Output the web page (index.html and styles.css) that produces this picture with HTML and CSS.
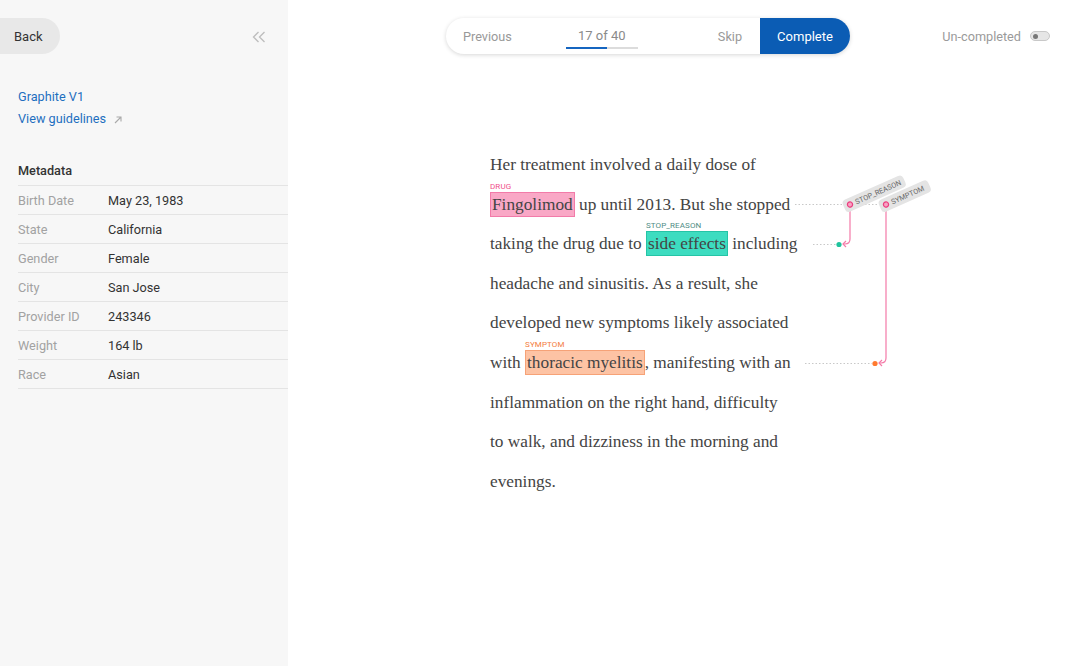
FILE: index.html
```html
<!DOCTYPE html>
<html>
<head>
<meta charset="utf-8">
<link rel="stylesheet" href="styles.css">
</head>
<body>
<div class="app">
  <aside class="sidebar">
    <div class="side-top">
      <button class="back">Back</button>
      <svg class="collapse" width="14" height="12" viewBox="0 0 14 12"><path d="M6.5 1 L1.5 6 L6.5 11 M12.5 1 L7.5 6 L12.5 11" fill="none" stroke="#bdbdbd" stroke-width="1.3"/></svg>
    </div>
    <div class="links">
      <a class="link">Graphite V1</a>
      <a class="link">View guidelines <svg class="ext" width="10" height="10" viewBox="0 0 10 10"><path d="M2 8 L8 2 M3.5 2 H8 V6.5" fill="none" stroke="#aaa" stroke-width="1.1"/></svg></a>
    </div>
    <div class="meta">
      <div class="meta-title">Metadata</div>
      <div class="row"><span class="k">Birth Date</span><span class="v">May 23, 1983</span></div>
      <div class="row"><span class="k">State</span><span class="v">California</span></div>
      <div class="row"><span class="k">Gender</span><span class="v">Female</span></div>
      <div class="row"><span class="k">City</span><span class="v">San Jose</span></div>
      <div class="row"><span class="k">Provider ID</span><span class="v">243346</span></div>
      <div class="row"><span class="k">Weight</span><span class="v">164 lb</span></div>
      <div class="row"><span class="k">Race</span><span class="v">Asian</span></div>
    </div>
  </aside>
  <main class="main">
    <header class="topbar">
      <div class="pill">
        <button class="nav prev">Previous</button>
        <div class="counter">
          <span class="count">17 of 40</span>
          <div class="progress"><div class="progress-fill" style="width:57%"></div></div>
        </div>
        <button class="nav skip">Skip</button>
        <button class="complete">Complete</button>
      </div>
      <div class="status">
        <span>Un-completed</span>
        <span class="toggle"><span class="knob"></span></span>
      </div>
    </header>
    <section class="doc">
      <div class="line">Her treatment involved a daily dose of</div>
      <div class="line"><span class="ent drug"><span class="tag">DRUG</span>Fingolimod</span> up until 2013. But she stopped</div>
      <div class="line">taking the drug due to <span class="ent reason"><span class="tag">STOP_REASON</span>side effects</span> including</div>
      <div class="line">headache and sinusitis. As a result, she</div>
      <div class="line">developed new symptoms likely associated</div>
      <div class="line">with <span class="ent symptom"><span class="tag">SYMPTOM</span>thoracic myelitis</span>, manifesting with an</div>
      <div class="line">inflammation on the right hand, difficulty</div>
      <div class="line">to walk, and dizziness in the morning and</div>
      <div class="line">evenings.</div>
    </section>
    <svg class="relations" width="792" height="666" viewBox="0 0 792 666">
      <g stroke="#c8c8c8" stroke-width="1" stroke-dasharray="1.5 2" fill="none">
        <line x1="507" y1="204.5" x2="594" y2="204.5"/>
        <line x1="525" y1="244.5" x2="548" y2="244.5"/>
        <line x1="517" y1="363.5" x2="584" y2="363.5"/>
      </g>
      <g stroke="#f47aa8" stroke-width="1.2" fill="none">
        <path d="M562 208 V239 Q562 244 557 244 H555"/>
        <path d="M558 241 L555 244 L558 247"/>
        <path d="M598 208 V358 Q598 363 593 363 H591"/>
        <path d="M594 360 L591 363 L594 366"/>
      </g>
      <circle cx="551" cy="244.5" r="2.6" fill="#1fc39d"/>
      <circle cx="587" cy="363.5" r="2.6" fill="#ff7a2f"/>
      <g transform="translate(562 204.5) rotate(-24)">
        <rect x="-6.5" y="-6.5" width="66" height="13" rx="4" fill="#e4e4e4"/>
        <circle r="2.6" fill="#f7a3c3" stroke="#ec3f80" stroke-width="1.2"/>
        <text x="6" y="2.7" class="rel-text">STOP_REASON</text>
      </g>
      <g transform="translate(598 204.5) rotate(-24)">
        <rect x="-6.5" y="-6.5" width="54" height="13" rx="4" fill="#e4e4e4"/>
        <circle r="2.6" fill="#f7a3c3" stroke="#ec3f80" stroke-width="1.2"/>
        <text x="6" y="2.7" class="rel-text">SYMPTOM</text>
      </g>
    </svg>
  </main>
</div>
</body>
</html>
```
FILE: styles.css
```css
* { box-sizing: border-box; }
html, body { margin: 0; padding: 0; }
body {
  width: 1080px;
  height: 666px;
  overflow: hidden;
  font-family: Roboto, "Liberation Sans", Arial, sans-serif;
  background: #ffffff;
}
.app {
  display: flex;
  height: 666px;
}
.sidebar {
  width: 288px;
  flex: none;
  background: #f7f7f7;
  padding-top: 18px;
}
.side-top {
  display: flex;
  align-items: center;
  justify-content: space-between;
  padding-right: 22px;
}
.back {
  height: 36px;
  width: 60px;
  border: none;
  background: #e8e8e8;
  border-radius: 0 18px 18px 0;
  font-family: Roboto, sans-serif;
  font-size: 13px;
  color: #333;
  text-align: left;
  padding: 0 0 0 14px;
}
.collapse { display: block; margin-top: 2px; }
.links {
  display: flex;
  flex-direction: column;
  gap: 6px;
  padding: 35px 18px 0;
}
.link {
  font-size: 12.7px;
  color: #1f6fbf;
  line-height: 16px;
  display: flex;
  align-items: center;
  gap: 7px;
}
.ext { margin-top: 2px; }
.meta {
  padding: 36px 0 0 18px;
}
.meta-title {
  font-size: 12.7px;
  font-weight: 500;
  color: #333;
  height: 22px;
  line-height: 15px;
}
.row {
  display: flex;
  align-items: center;
  height: 29px;
  border-top: 1px solid #e4e4e4;
  font-size: 12.7px;
}
.row:last-child { border-bottom: 1px solid #e4e4e4; height: 30px; }
.k { width: 90px; color: #a2a2a2; }
.v { color: #333; }

.main {
  flex: 1;
  position: relative;
}
.topbar {
  height: 72px;
  display: flex;
  align-items: center;
  padding-left: 158px;
  padding-right: 30px;
}
.pill {
  display: flex;
  align-items: center;
  height: 36px;
  width: 404px;
  border-radius: 18px;
  background: #fff;
  box-shadow: 0 1px 4px rgba(0,0,0,0.16);
}
.nav {
  border: none;
  background: none;
  font-family: Roboto, sans-serif;
  font-size: 12.7px;
  color: #999;
  padding: 0;
}
.prev { margin-left: 17px; }
.counter {
  margin-left: 54px;
  width: 72px;
  height: 36px;
  display: flex;
  flex-direction: column;
  align-items: center;
  justify-content: flex-end;
}
.count {
  font-size: 13px;
  color: #8a8a8a;
  line-height: 16px;
  margin-bottom: 3px;
}
.progress {
  width: 72px;
  height: 2px;
  background: #dcdcdc;
  margin-bottom: 5px;
}
.progress-fill { height: 2px; background: #1565c0; }
.skip { margin-left: 80px; }
.complete {
  margin-left: auto;
  width: 90px;
  height: 36px;
  border: none;
  border-radius: 0 18px 18px 0;
  background: #0b5cb4;
  color: #fff;
  font-family: Roboto, sans-serif;
  font-size: 13px;
  padding: 0;
}
.status {
  margin-left: auto;
  display: flex;
  align-items: center;
  gap: 9px;
  font-size: 12.7px;
  color: #9a9a9a;
}
.toggle {
  width: 20px;
  height: 10px;
  border-radius: 5px;
  background: #e6e6e6;
  border: 1px solid #c8c8c8;
  display: flex;
  align-items: center;
  padding-left: 2px;
}
.knob {
  width: 5px;
  height: 5px;
  border-radius: 50%;
  background: #777;
}

.doc {
  padding: 73px 0 0 202px;
  font-family: "Liberation Serif", "DejaVu Serif", serif;
  font-size: 17.3px;
  color: #444;
}
.line {
  height: 39.6px;
  line-height: 39.6px;
  white-space: nowrap;
}
.ent {
  position: relative;
  padding: 2px 1px;
  border: 1px solid;
}
.drug { background: #f9a8c6; border-color: #f27ba9; }
.reason { background: #3ddcc0; border-color: #25c4a6; }
.symptom { background: #fdc3a4; border-color: #f6a277; }
.tag {
  position: absolute;
  left: -1px;
  top: -11px;
  font-family: Roboto, sans-serif;
  font-size: 8px;
  line-height: 9px;
  letter-spacing: 0.1px;
}
.drug .tag { color: #ef4f8a; }
.reason .tag { color: #4f8d86; }
.symptom .tag { color: #f47c3c; }
.relations {
  position: absolute;
  left: 0;
  top: 0;
  pointer-events: none;
}
.rel-text {
  font-family: Roboto, sans-serif;
  font-size: 7.3px;
  fill: #666;
}
```
